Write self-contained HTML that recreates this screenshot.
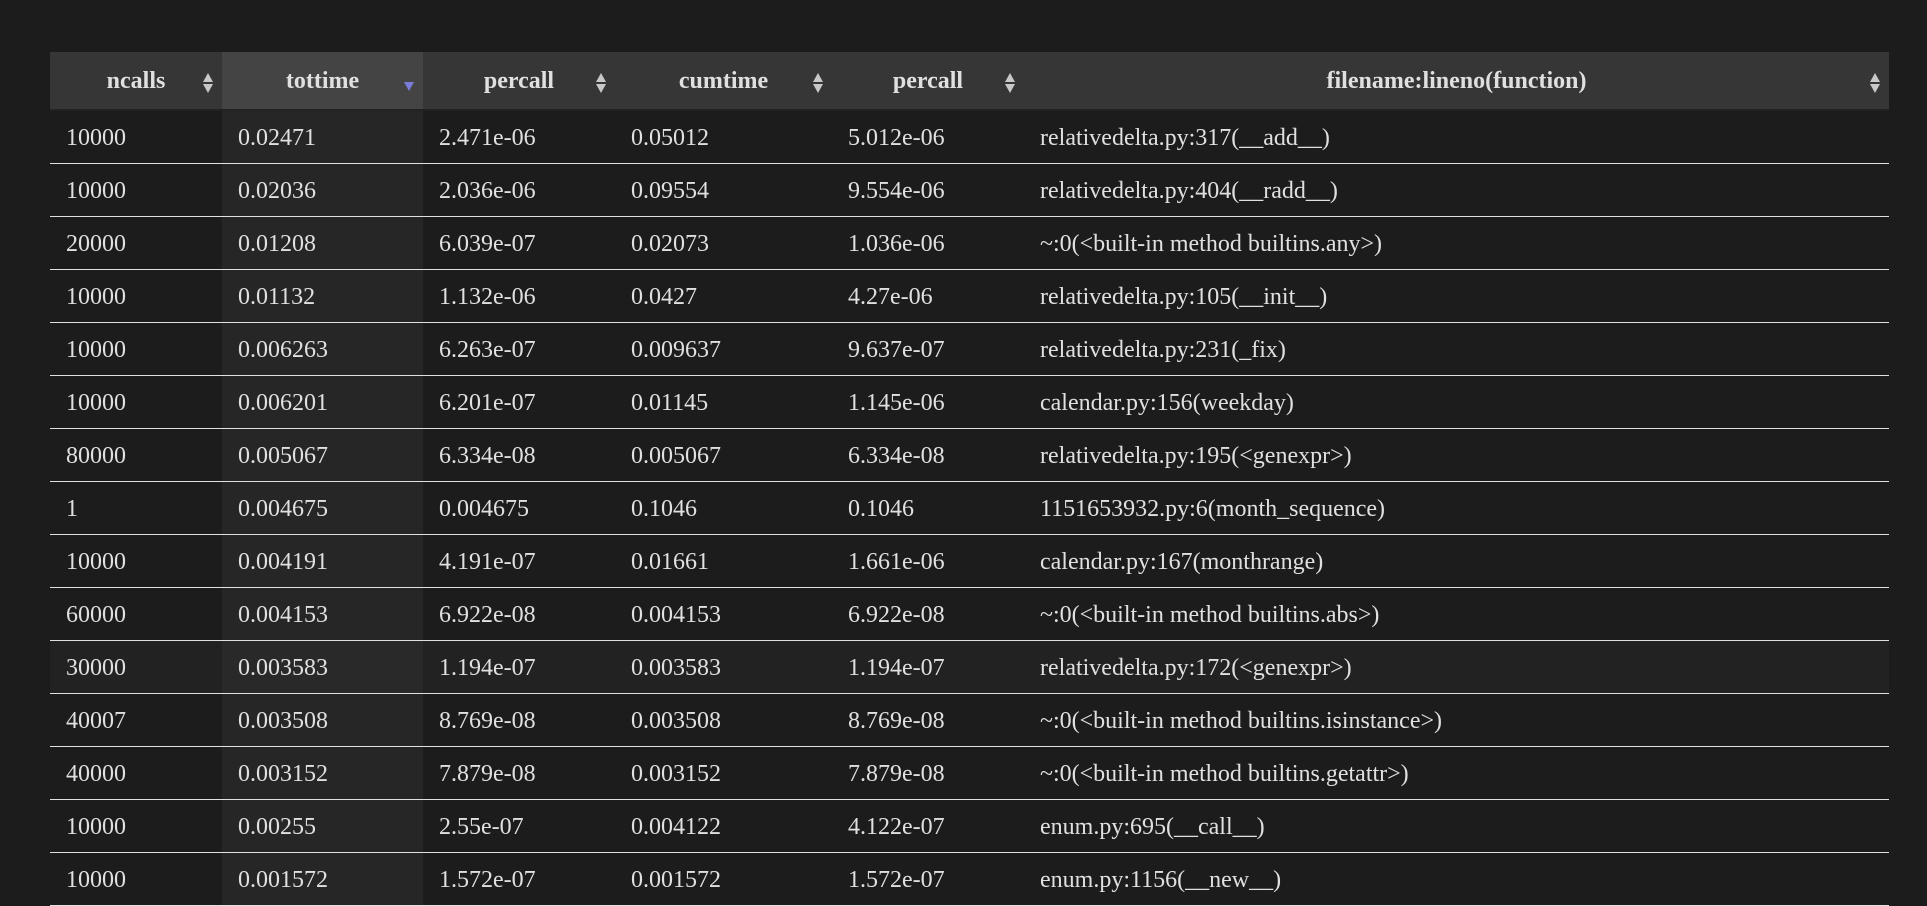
<!DOCTYPE html>
<html><head><meta charset="utf-8"><style>
html,body{margin:0;padding:0;background:#1c1c1c;width:1927px;height:889px;overflow:hidden}
table{position:absolute;left:50px;top:52px;width:1839px;border-collapse:collapse;font-family:"Liberation Serif",serif;font-size:24px;color:#e0e0e0;table-layout:fixed}
th{background:#363636;height:55px;font-weight:bold;text-align:center;position:relative;border-bottom:2px solid #222;padding:2px 0 0 0}
th.s{background:#444}
td{height:49px;border-bottom:1.5px solid #e0e0e0;padding:3px 0 0 16px;white-space:nowrap}
td.s{background:#262626}
tr.h td{background:#222}
tr.h td.s{background:#292929}
.a{position:absolute;right:8px;top:20px;width:12px;height:22px}
</style></head><body>
<table>
<colgroup><col style="width:172px"><col style="width:201px"><col style="width:192px"><col style="width:217px"><col style="width:192px"><col></colgroup>
<tr>
<th>ncalls<svg class="a" viewBox="0 0 12 22"><path d="M6 1L11 10H1Z M1 12H11L6 21Z" fill="#c8c8c8"/></svg></th>
<th class="s">tottime<svg class="a" viewBox="0 0 12 22" style="top:24px"><path d="M1 6H11L6 15Z" fill="#7b7bd8"/></svg></th>
<th>percall<svg class="a" viewBox="0 0 12 22"><path d="M6 1L11 10H1Z M1 12H11L6 21Z" fill="#c8c8c8"/></svg></th>
<th>cumtime<svg class="a" viewBox="0 0 12 22"><path d="M6 1L11 10H1Z M1 12H11L6 21Z" fill="#c8c8c8"/></svg></th>
<th>percall<svg class="a" viewBox="0 0 12 22"><path d="M6 1L11 10H1Z M1 12H11L6 21Z" fill="#c8c8c8"/></svg></th>
<th>filename:lineno(function)<svg class="a" viewBox="0 0 12 22"><path d="M6 1L11 10H1Z M1 12H11L6 21Z" fill="#c8c8c8"/></svg></th>
</tr>
<tr><td>10000</td><td class="s">0.02471</td><td>2.471e-06</td><td>0.05012</td><td>5.012e-06</td><td>relativedelta.py:317(__add__)</td></tr>
<tr><td>10000</td><td class="s">0.02036</td><td>2.036e-06</td><td>0.09554</td><td>9.554e-06</td><td>relativedelta.py:404(__radd__)</td></tr>
<tr><td>20000</td><td class="s">0.01208</td><td>6.039e-07</td><td>0.02073</td><td>1.036e-06</td><td>~:0(&lt;built-in method builtins.any&gt;)</td></tr>
<tr><td>10000</td><td class="s">0.01132</td><td>1.132e-06</td><td>0.0427</td><td>4.27e-06</td><td>relativedelta.py:105(__init__)</td></tr>
<tr><td>10000</td><td class="s">0.006263</td><td>6.263e-07</td><td>0.009637</td><td>9.637e-07</td><td>relativedelta.py:231(_fix)</td></tr>
<tr><td>10000</td><td class="s">0.006201</td><td>6.201e-07</td><td>0.01145</td><td>1.145e-06</td><td>calendar.py:156(weekday)</td></tr>
<tr><td>80000</td><td class="s">0.005067</td><td>6.334e-08</td><td>0.005067</td><td>6.334e-08</td><td>relativedelta.py:195(&lt;genexpr&gt;)</td></tr>
<tr><td>1</td><td class="s">0.004675</td><td>0.004675</td><td>0.1046</td><td>0.1046</td><td>1151653932.py:6(month_sequence)</td></tr>
<tr><td>10000</td><td class="s">0.004191</td><td>4.191e-07</td><td>0.01661</td><td>1.661e-06</td><td>calendar.py:167(monthrange)</td></tr>
<tr><td>60000</td><td class="s">0.004153</td><td>6.922e-08</td><td>0.004153</td><td>6.922e-08</td><td>~:0(&lt;built-in method builtins.abs&gt;)</td></tr>
<tr class="h"><td>30000</td><td class="s">0.003583</td><td>1.194e-07</td><td>0.003583</td><td>1.194e-07</td><td>relativedelta.py:172(&lt;genexpr&gt;)</td></tr>
<tr><td>40007</td><td class="s">0.003508</td><td>8.769e-08</td><td>0.003508</td><td>8.769e-08</td><td>~:0(&lt;built-in method builtins.isinstance&gt;)</td></tr>
<tr><td>40000</td><td class="s">0.003152</td><td>7.879e-08</td><td>0.003152</td><td>7.879e-08</td><td>~:0(&lt;built-in method builtins.getattr&gt;)</td></tr>
<tr><td>10000</td><td class="s">0.00255</td><td>2.55e-07</td><td>0.004122</td><td>4.122e-07</td><td>enum.py:695(__call__)</td></tr>
<tr><td>10000</td><td class="s">0.001572</td><td>1.572e-07</td><td>0.001572</td><td>1.572e-07</td><td>enum.py:1156(__new__)</td></tr>
</table>
</body></html>
